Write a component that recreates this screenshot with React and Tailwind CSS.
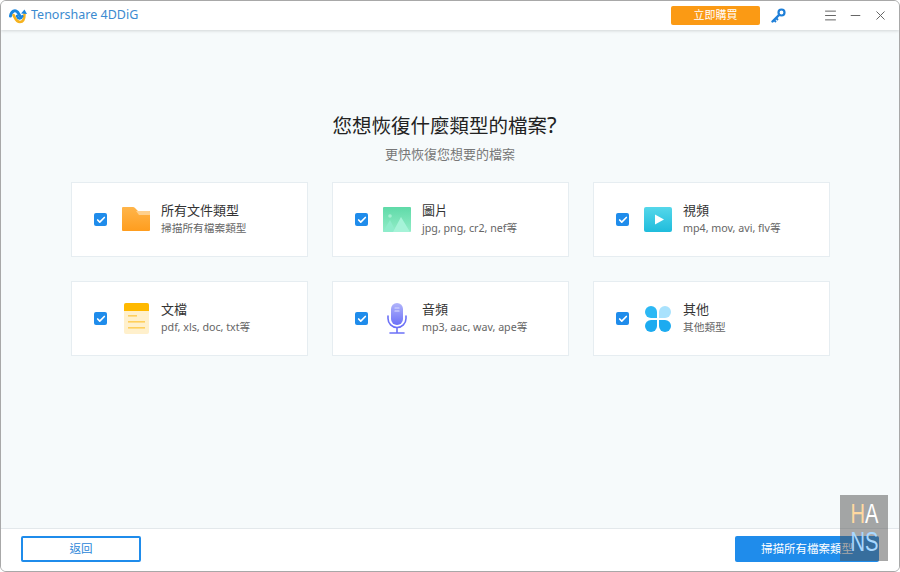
import { Check, Menu, Minus, X } from "lucide-react";

const cjk = "font-['Noto_Sans','Noto_Sans_CJK_TC',sans-serif]";

function Logo() {
  return (
    <svg width="18" height="16" viewBox="0 0 18 16" fill="none">
      <path d="M1.5 8 C2.5 3 6 1.5 8.5 4 L11 8" stroke="#1a86e0" strokeWidth="3" strokeLinecap="round" />
      <path d="M4.5 7 C6 9.5 7 14 11 14 C14 14 15.5 11 15.5 6" stroke="#f5b21f" strokeWidth="2.6" strokeLinecap="round" />
      <path d="M8 8 C9 11 12 11.5 13.5 8" stroke="#1a86e0" strokeWidth="2.4" strokeLinecap="round" />
      <path d="M12 5.5 L15.5 1.5 L18 6 Z" fill="#1a86e0" />
    </svg>
  );
}

function KeyIcon() {
  return (
    <svg width="15" height="15" viewBox="0 0 15 15" fill="none">
      <circle cx="10.5" cy="4.5" r="3" stroke="#1e7fd8" strokeWidth="2.2" />
      <path d="M8 7 L1.5 13.5" stroke="#1e7fd8" strokeWidth="2.4" strokeLinecap="round" />
      <path d="M3 12 L5 14 M5 10 L7 12" stroke="#1e7fd8" strokeWidth="1.8" />
    </svg>
  );
}

function FolderIcon() {
  return (
    <svg width="28" height="25" viewBox="0 0 28 25">
      <defs>
        <linearGradient id="folder" x1="0" y1="0" x2="0" y2="1">
          <stop offset="0" stopColor="#ffb54a" />
          <stop offset="1" stopColor="#ff9d1e" />
        </linearGradient>
      </defs>
      <path d="M1 0 H11 Q12 0 13 1 L16 4 H27 Q28 4 28 5 V23 Q28 24 27 24 H1 Q0 24 0 23 V1 Q0 0 1 0 Z" fill="url(#folder)" />
      <path d="M14 4 H27 Q28 4 28 5 V8 H17 Z" fill="#ffd08c" />
    </svg>
  );
}

function ImageIcon() {
  return (
    <svg width="28" height="26" viewBox="0 0 28 26">
      <defs>
        <linearGradient id="pic" x1="0" y1="0" x2="0" y2="1">
          <stop offset="0" stopColor="#5fdaa8" />
          <stop offset="1" stopColor="#93edc8" />
        </linearGradient>
      </defs>
      <rect width="28" height="25" rx="1" fill="url(#pic)" />
      <circle cx="7" cy="9" r="1.8" fill="#a5f0d2" />
      <path d="M0 25 L7 13 L13 25 Z" fill="#8eeccb" />
      <path d="M10 25 L18 10 L27 25 Z" fill="#a6f3d8" />
    </svg>
  );
}

function VideoIcon() {
  return (
    <svg width="28" height="25" viewBox="0 0 28 25">
      <defs>
        <linearGradient id="vid" x1="0" y1="0" x2="0" y2="1">
          <stop offset="0" stopColor="#55d7ea" />
          <stop offset="1" stopColor="#1fbcdc" />
        </linearGradient>
      </defs>
      <rect width="28" height="25" rx="2" fill="url(#vid)" />
      <path d="M11 7.5 L20 12.5 L11 17.5 Z" fill="#fff" />
    </svg>
  );
}

function DocIcon() {
  return (
    <svg width="25" height="31" viewBox="0 0 25 31">
      <rect width="25" height="31" rx="2" fill="#fff0cc" />
      <path d="M0 8 V2 Q0 0 2 0 H23 Q25 0 25 2 V8 Z" fill="#ffb900" />
      <rect x="4" y="12" width="9" height="1.6" fill="#ffcf5c" />
      <rect x="4" y="18" width="17" height="1.6" fill="#ffcf5c" />
      <rect x="4" y="24" width="17" height="1.6" fill="#ffcf5c" />
    </svg>
  );
}

function MicIcon() {
  return (
    <svg width="20" height="31" viewBox="0 0 20 31" fill="none">
      <defs>
        <linearGradient id="mic" x1="0" y1="0" x2="0" y2="1">
          <stop offset="0" stopColor="#b1b4fb" />
          <stop offset="1" stopColor="#6c71f7" />
        </linearGradient>
      </defs>
      <rect x="4" y="0" width="12" height="22" rx="6" fill="url(#mic)" />
      <path d="M8 5 H12 M8 8 H12" stroke="#dcdefe" strokeWidth="1.2" strokeLinecap="round" />
      <path d="M1 13 V15.5 A9 9 0 0 0 19 15.5 V13" stroke="#6c71f7" strokeWidth="1.6" strokeLinecap="round" />
      <path d="M10 25 V30 M3 30 H17" stroke="#6c71f7" strokeWidth="1.6" strokeLinecap="round" />
    </svg>
  );
}

function OtherIcon() {
  return (
    <svg width="26" height="26" viewBox="0 0 26 26">
      <path d="M6 0 A6 6 0 0 1 12 6 V12 H6 A6 6 0 0 1 6 0 Z" fill="#2cb8f4" />
      <path d="M20 0 A6 6 0 0 1 20 12 H14 V6 A6 6 0 0 1 20 0 Z" fill="#a9e2fd" />
      <path d="M6 14 H12 V20 A6 6 0 0 1 0 20 A6 6 0 0 1 6 14 Z" fill="#1cabf0" />
      <path d="M14 14 H20 A6 6 0 0 1 20 26 A6 6 0 0 1 14 20 Z" fill="#1cabf0" />
    </svg>
  );
}

const cards = [
  { title: "所有文件類型", sub: "掃描所有檔案類型", icon: <FolderIcon /> },
  { title: "圖片", sub: "jpg, png, cr2, nef等", icon: <ImageIcon /> },
  { title: "視頻", sub: "mp4, mov, avi, flv等", icon: <VideoIcon /> },
  { title: "文檔", sub: "pdf, xls, doc, txt等", icon: <DocIcon /> },
  { title: "音頻", sub: "mp3, aac, wav, ape等", icon: <MicIcon /> },
  { title: "其他", sub: "其他類型", icon: <OtherIcon /> },
];

function Card({ title, sub, icon }) {
  return (
    <div className="flex h-[75px] items-center border border-[#e6edf1] bg-white pl-[22px]">
      <div className="flex h-[13px] w-[13px] items-center justify-center rounded-[2px] bg-[#1f8ceb]">
        <Check size={10} strokeWidth={4} className="text-white" />
      </div>
      <div className="ml-[15px] flex w-[28px] justify-center">{icon}</div>
      <div className="ml-[11px] -mt-[2px]">
        <div className="text-[13px] leading-[18px] text-[#333333]">{title}</div>
        <div className="text-[10.7px] leading-[18px] text-[#666666]">{sub}</div>
      </div>
    </div>
  );
}

export default function App() {
  return (
    <div className={`relative flex h-[572px] w-[900px] flex-col overflow-hidden rounded-[6px] border border-[#a8a8a8] bg-[#f6fafb] ${cjk}`}>
      <header className="flex h-[29px] shrink-0 items-center bg-white pl-[8px] shadow-[0_1px_3px_rgba(0,0,0,0.15)]">
        <Logo />
        <span className="ml-[4px] text-[12.5px] text-[#3b8ad0]">Tenorshare 4DDiG</span>
        <button className="ml-auto flex h-[19px] w-[89px] items-center justify-center rounded-[2px] bg-[#fb9a14] text-[11px] text-white">
          立即購買
        </button>
        <div className="ml-[11px]"><KeyIcon /></div>
        <div className="ml-[37px] flex items-center gap-[10px] pr-[11px] text-[#666666]">
          <Menu size={15} strokeWidth={1.6} />
          <Minus size={15} strokeWidth={1.6} />
          <X size={15} strokeWidth={1.6} />
        </div>
      </header>

      <main className="flex flex-1 flex-col items-center pl-[1px] pt-[79px]">
        <h1 className="mr-[12px] text-[19.5px] leading-[30px] text-[#222222]">
          您想恢復什麼類型的檔案<span className="text-[22px] leading-[30px]">?</span>
        </h1>
        <p className="mr-[1px] mt-[4px] text-[13px] leading-[18px] text-[#777777]">更快恢復您想要的檔案</p>
        <div className="mt-[19px] grid w-[759px] grid-cols-3 gap-x-[24px] gap-y-[24px]">
          {cards.map((c) => (
            <Card key={c.title} {...c} />
          ))}
        </div>
      </main>

      <footer className="flex h-[43px] shrink-0 items-center justify-between border-t border-[#e3e8eb] bg-white pb-[2px] pl-[20px] pr-[20px]">
        <button className="h-[26px] w-[120px] rounded-[2px] border-2 border-[#1f8ceb] text-[11.5px] text-[#2a85d8]">
          返回
        </button>
        <button className="h-[26px] w-[144px] rounded-[2px] bg-[#1f8ceb] text-[11.5px] text-white">
          掃描所有檔案類型
        </button>
      </footer>

      <div className="absolute left-[839px] top-[494px] flex h-[66px] w-[48px] flex-col items-center justify-center bg-[rgba(80,80,80,0.5)] font-['Liberation_Sans',sans-serif] text-[28px] leading-[28px] text-white">
        <div className="scale-x-[0.72]"><span className="text-[#ffd9a0]">H</span>A</div>
        <div className="scale-x-[0.72] text-[#a9d8ff]">NS</div>
      </div>
    </div>
  );
}
